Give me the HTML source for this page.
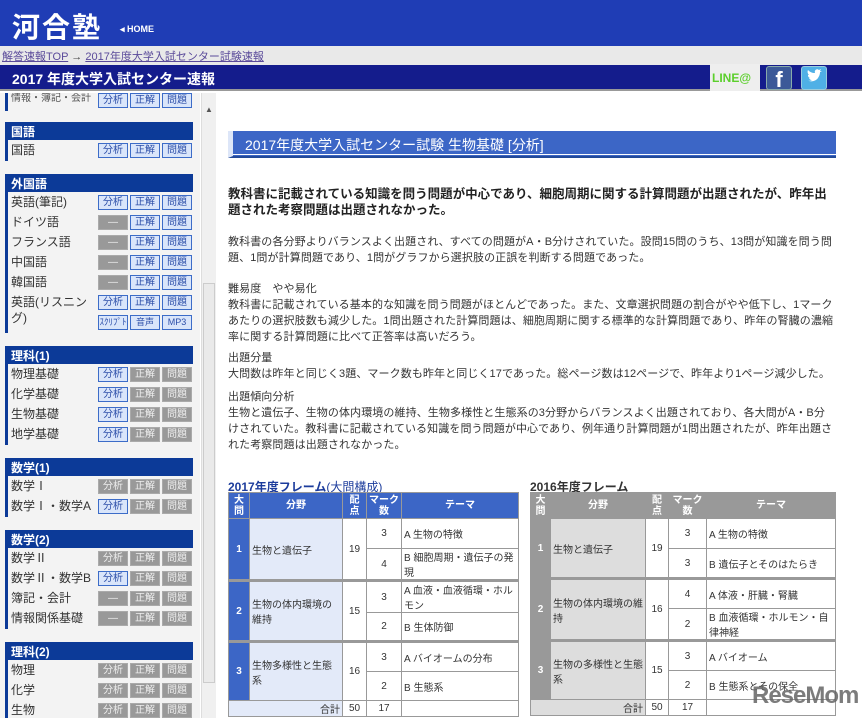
<!DOCTYPE html>
<html><head><meta charset="utf-8"><style>
*{margin:0;padding:0;box-sizing:border-box}
body{width:862px;height:718px;overflow:hidden;background:#fff;font-family:"Liberation Sans","Noto Sans CJK JP",sans-serif;position:relative;color:#222}
.abs{position:absolute}
#hd{left:0;top:0;width:862px;height:46px;background:#1f3db5}
#logo{left:12px;top:6px;color:#fff;font-size:28px;font-weight:bold;letter-spacing:2px}
#home{left:120px;top:24px;color:#fff;font-size:9px;font-weight:bold}
#bc{left:0;top:46px;width:862px;height:19px;background:#e9e9e9;font-size:11px;color:#444;padding:2px 2px}
#bc a{color:#5a4a9a;text-decoration:underline}
#tb{left:0;top:65px;width:862px;height:26px;background:#141c8c;color:#fff;font-size:14px;font-weight:bold;padding:4px 12px;border-bottom:2px solid #999}
#side{left:0;top:93px;width:200px;height:625px;background:#f3f3f3;overflow:hidden}
#sb{left:201px;top:93px;width:15px;height:625px;background:#f0f0f0;border-left:1px solid #ddd}
.gh{position:absolute;left:5px;width:188px;height:18px;background:#0c3a98;color:#fff;font-size:12px;font-weight:bold;padding:1px 6px}
.bar{position:absolute;left:5px;width:3px;background:#0c3a98}
.rw{position:absolute;left:11px;font-size:12px;color:#333;line-height:16px}
.bt{position:absolute;width:30px;height:15px;font-size:10px;text-align:center;line-height:13px}
.b{background:#d9e5fa;border:1px solid #3c6cc8;color:#2c4ea8}
.g{background:#999;border:1px solid #aaa;color:#eee}
#ttl{left:228px;top:131px;width:608px;height:27px;background:#3c66c6;border-bottom:2px solid #234a9a;color:#fff;font-size:14px;padding:4px 12px;border-left:5px solid #dde6f8}
#ttl:after{content:"";position:absolute;left:0;right:0;bottom:1px;height:1px;background:#fff}
.p{position:absolute;left:228px;width:606px;font-size:11px;line-height:16px;color:#333;letter-spacing:0.1px}
table{position:absolute;border-collapse:collapse;font-size:10px;color:#333}
td,th{border:1px solid #999;padding:0 2px}
th{color:#fff;font-weight:bold;height:26px;line-height:11px}
</style></head><body>
<div id="hd" class="abs"></div>
<div id="logo" class="abs">河合塾</div>
<div id="home" class="abs">◂ HOME</div>
<div id="bc" class="abs"><a>解答速報TOP</a> → <a>2017年度大学入試センター試験速報</a></div>
<div id="tb" class="abs">2017 年度大学入試センター速報</div>
<div class="abs" style="left:710px;top:64px;width:50px;height:27px;background:#eee;color:#5ccf2c;font-size:12px;font-weight:bold;padding:7px 2px">LINE@</div>
<div class="abs" style="left:766px;top:66px;width:26px;height:24px;background:#3b5998;border:1px solid #8aa;border-radius:3px;color:#fff;font-size:22px;font-weight:bold;text-align:center;line-height:26px">f</div>
<div class="abs" style="left:801px;top:66px;width:26px;height:24px;background:#4fb0e6;border:1px solid #9cd;border-radius:3px"><svg width="24" height="22" viewBox="0 0 24 22"><path d="M5 13c3 2 8 2 11-2 2-3 2-5 2-6l2-1-2 0 1-2-2 1c-2-2-5 0-4 3-3 0-5-1-7-3-1 2 0 4 1 5l-1 0c0 2 1 3 3 3l-2 0c1 2 2 2 3 2-2 1-3 1-5 0z" fill="#fff"/></svg></div>

<div id="side" class="abs">
<div class="bar" style="top:0;height:18px"></div>
<div class="rw" style="top:-2px;font-size:10px;color:#555">情報・簿記・会計</div>
<div class="bt b" style="left:98px;top:0">分析</div><div class="bt b" style="left:130px;top:0">正解</div><div class="bt b" style="left:162px;top:0">問題</div>
</div>
<div id="sb" class="abs"><div style="color:#555;font-size:8px;text-align:center;margin-top:12px">▲</div><div style="position:absolute;left:1px;top:190px;width:12px;height:400px;background:#eaeaea;border:1px solid #ccc"></div></div>

<div id="ttl" class="abs">2017年度大学入試センター試験 生物基礎 [分析]</div>
<div class="p" style="top:186px;font-weight:bold;font-size:12.5px;color:#222;letter-spacing:0">教科書に記載されている知識を問う問題が中心であり、細胞周期に関する計算問題が出題されたが、昨年出題された考察問題は出題されなかった。</div>
<div class="p" style="top:234px">教科書の各分野よりバランスよく出題され、すべての問題がA・B分けされていた。設問15問のうち、13問が知識を問う問題、1問が計算問題であり、1問がグラフから選択肢の正誤を判断する問題であった。</div>
<div class="p" style="top:281px">難易度　やや易化<br>教科書に記載されている基本的な知識を問う問題がほとんどであった。また、文章選択問題の割合がやや低下し、1マークあたりの選択肢数も減少した。1問出題された計算問題は、細胞周期に関する標準的な計算問題であり、昨年の腎臓の濃縮率に関する計算問題に比べて正答率は高いだろう。</div>
<div class="p" style="top:350px">出題分量<br>大問数は昨年と同じく3題、マーク数も昨年と同じく17であった。総ページ数は12ページで、昨年より1ページ減少した。</div>
<div class="p" style="top:389px">出題傾向分析<br>生物と遺伝子、生物の体内環境の維持、生物多様性と生態系の3分野からバランスよく出題されており、各大問がA・B分けされていた。教科書に記載されている知識を問う問題が中心であり、例年通り計算問題が1問出題されたが、昨年出題された考察問題は出題されなかった。</div>

<div class="abs" style="left:228px;top:478px;font-size:12px;font-weight:bold;color:#1c3c9c">2017年度フレーム<span style="font-weight:normal">(大問構成)</span></div>
<div class="abs" style="left:530px;top:478px;font-size:12px;font-weight:bold;color:#333">2016年度フレーム</div>

<table style="left:228px;top:492px;width:291px">
<tr style="background:#3c66c6"><th style="width:21px">大<br>問</th><th style="width:93px">分野</th><th style="width:24px">配<br>点</th><th style="width:35px">マーク<br>数</th><th>テーマ</th></tr>
<tr style="height:30px"><td rowspan=2 style="background:#3c66c6;color:#fff;font-weight:bold;text-align:center">1</td><td rowspan=2 style="background:#e3eaf9">生物と遺伝子</td><td rowspan=2 style="text-align:center">19</td><td style="text-align:center">3</td><td>A 生物の特徴</td></tr>
<tr style="height:30px"><td style="text-align:center">4</td><td>B 細胞周期・遺伝子の発現</td></tr>
<tr style="height:30px;border-top:3px solid #999"><td rowspan=2 style="background:#3c66c6;color:#fff;font-weight:bold;text-align:center">2</td><td rowspan=2 style="background:#e3eaf9">生物の体内環境の維持</td><td rowspan=2 style="text-align:center">15</td><td style="text-align:center">3</td><td>A 血液・血液循環・ホルモン</td></tr>
<tr style="height:29px"><td style="text-align:center">2</td><td>B 生体防御</td></tr>
<tr style="height:30px;border-top:3px solid #999"><td rowspan=2 style="background:#3c66c6;color:#fff;font-weight:bold;text-align:center">3</td><td rowspan=2 style="background:#e3eaf9">生物多様性と生態系</td><td rowspan=2 style="text-align:center">16</td><td style="text-align:center">3</td><td>A バイオームの分布</td></tr>
<tr style="height:29px"><td style="text-align:center">2</td><td>B 生態系</td></tr>
<tr style="height:14px;background:#e3eaf9"><td colspan=2 style="text-align:right">合計</td><td style="text-align:center;background:#fff">50</td><td style="text-align:center;background:#fff">17</td><td style="background:#fff"></td></tr>
</table>

<table style="left:530px;top:492px;width:306px">
<tr style="background:#999"><th style="width:20px">大<br>問</th><th style="width:95px">分野</th><th style="width:23px">配<br>点</th><th style="width:38px">マーク<br>数</th><th>テーマ</th></tr>
<tr style="height:30px"><td rowspan=2 style="background:#999;color:#fff;font-weight:bold;text-align:center">1</td><td rowspan=2 style="background:#ddd">生物と遺伝子</td><td rowspan=2 style="text-align:center">19</td><td style="text-align:center">3</td><td>A 生物の特徴</td></tr>
<tr style="height:30px"><td style="text-align:center">3</td><td>B 遺伝子とそのはたらき</td></tr>
<tr style="height:30px;border-top:3px solid #999"><td rowspan=2 style="background:#999;color:#fff;font-weight:bold;text-align:center">2</td><td rowspan=2 style="background:#ddd">生物の体内環境の維持</td><td rowspan=2 style="text-align:center">16</td><td style="text-align:center">4</td><td>A 体液・肝臓・腎臓</td></tr>
<tr style="height:29px"><td style="text-align:center">2</td><td>B 血液循環・ホルモン・自律神経</td></tr>
<tr style="height:30px;border-top:3px solid #999"><td rowspan=2 style="background:#999;color:#fff;font-weight:bold;text-align:center">3</td><td rowspan=2 style="background:#ddd">生物の多様性と生態系</td><td rowspan=2 style="text-align:center">15</td><td style="text-align:center">3</td><td>A バイオーム</td></tr>
<tr style="height:29px"><td style="text-align:center">2</td><td>B 生態系とその保全</td></tr>
<tr style="height:14px;background:#ddd"><td colspan=2 style="text-align:right">合計</td><td style="text-align:center;background:#fff">50</td><td style="text-align:center;background:#fff">17</td><td style="background:#fff"></td></tr>
</table>
<div class="abs" style="left:752px;top:682px;font-size:24px;font-weight:bold;color:#666;opacity:.85;letter-spacing:-1px">ReseMom</div>

<script>
var G=[
["国語",122,[["国語","bbb"]]],
["外国語",174,[["英語(筆記)","bbb"],["ドイツ語","xbb"],["フランス語","xbb"],["中国語","xbb"],["韓国語","xbb"],["英語(リスニング)","bbb","L"]]],
["理科(1)",346,[["物理基礎","bgg"],["化学基礎","bgg"],["生物基礎","bgg"],["地学基礎","bgg"]]],
["数学(1)",458,[["数学Ⅰ","ggg"],["数学Ⅰ・数学A","bgg"]]],
["数学(2)",530,[["数学Ⅱ","ggg"],["数学Ⅱ・数学B","bgg"],["簿記・会計","xgg"],["情報関係基礎","xgg"]]],
["理科(2)",642,[["物理","ggg"],["化学","ggg"],["生物","ggg"]]]];
var h="";
G.forEach(function(g){
 var y=g[1];h+='<div class="gh" style="top:'+y+'px">'+g[0]+'</div>';
 var ry=y+21,start=y;
 g[2].forEach(function(r){
  var lab=["分析","正解","問題"];
  if(r[2]){h+='<div class="rw" style="top:'+(ry-1)+'px;width:80px">英語(リスニング)</div>';}
  else h+='<div class="rw" style="top:'+(ry-1)+'px">'+r[0]+'</div>';
  for(var i=0;i<3;i++){var c=r[1][i];var cl=c=="g"||c=="x"?"g":"b";var t=c=="x"?"—":lab[i];
   h+='<div class="bt '+cl+'" style="left:'+(98+32*i)+'px;top:'+ry+'px">'+t+'</div>';}
  if(r[2]){ry+=20;var l2=["ｽｸﾘﾌﾟﾄ","音声","MP3"];for(var i=0;i<3;i++)h+='<div class="bt b" style="left:'+(98+32*i)+'px;top:'+ry+'px;font-size:9px">'+l2[i]+'</div>';}
  ry+=20;
 });
 h+='<div class="bar" style="top:'+start+'px;height:'+(ry-start-2)+'px"></div>';
});
var s=document.getElementById("side");s.insertAdjacentHTML("beforeend",h.replace(/top:(\d+)px/g,function(m,a){return "top:"+(a-93)+"px"}));
</script>
</body></html>
